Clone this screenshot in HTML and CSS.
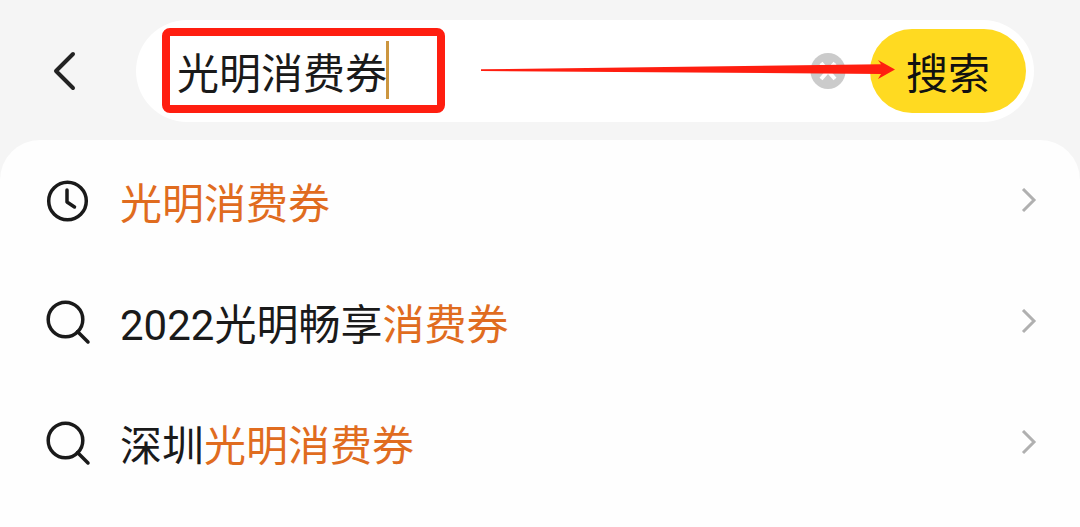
FILE: index.html
```html
<!DOCTYPE html>
<html lang="zh-CN">

<head>
    <meta charset="UTF-8">
    <meta name="viewport" content="width=device-width, initial-scale=1.0">
    <title>搜索</title>
    <link rel="stylesheet" href="styles.css">
</head>

<body>
    <!-- 顶部搜索栏 -->
    <header class="header">
        <button class="back" type="button" aria-label="返回">
            <svg width="24" height="42" viewBox="0 0 24 42">
                <path d="M21 4L4 21L21 38" />
            </svg>
        </button>
        <form class="search-bar">
            <div class="field">
                <input class="search-input" type="text" value="光明消费券" aria-label="搜索内容">
                <span class="caret"></span>
            </div>
            <button class="clear" type="button" aria-label="清空">
                <svg width="36" height="36" viewBox="0 0 36 36">
                    <ellipse cx="18" cy="18" rx="17.5" ry="18" />
                    <path d="M11 10L25 26M25 10L11 26" />
                </svg>
            </button>
            <button class="submit" type="button">搜索</button>
            <!-- 操作标注 -->
            <span class="mark-box"></span>
            <svg class="mark-arrow" width="414" height="20" viewBox="0 0 414 20">
                <path d="M0 9.3L400 4.3L397 0L414 9.5L397 19L400 14L0 11Z" />
            </svg>
        </form>
    </header>

    <!-- 搜索建议 -->
    <main class="panel">
        <ul class="list">
            <li>
                <a class="item" href="#">
                    <svg class="icon" width="46" height="46" viewBox="0 0 46 46">
                        <circle cx="21.5" cy="23" r="18.8" />
                        <path d="M21 12V24L28.5 29" stroke-linecap="round" stroke-linejoin="round" />
                    </svg>
                    <span class="text"><em>光明消费券</em></span>
                    <svg class="arrow" width="16" height="26" viewBox="0 0 16 26">
                        <path d="M2 1L13 12L2 23" />
                    </svg>
                </a>
            </li>
            <li>
                <a class="item" href="#">
                    <svg class="icon" width="46" height="46" viewBox="0 0 46 46">
                        <circle cx="19.5" cy="20.5" r="17.3" />
                        <path d="M31.5 32.5L42 43" stroke-linecap="round" />
                    </svg>
                    <span class="text"><span class="num">2022</span>光明畅享<em>消费券</em></span>
                    <svg class="arrow" width="16" height="26" viewBox="0 0 16 26">
                        <path d="M2 1L13 12L2 23" />
                    </svg>
                </a>
            </li>
            <li>
                <a class="item" href="#">
                    <svg class="icon" width="46" height="46" viewBox="0 0 46 46">
                        <circle cx="19.5" cy="20.5" r="17.3" />
                        <path d="M31.5 32.5L42 43" stroke-linecap="round" />
                    </svg>
                    <span class="text">深圳<em>光明消费券</em></span>
                    <svg class="arrow" width="16" height="26" viewBox="0 0 16 26">
                        <path d="M2 1L13 12L2 23" />
                    </svg>
                </a>
            </li>
        </ul>
    </main>
</body>

</html>
```
FILE: styles.css
```css
/* 整体样式 */
* {
    box-sizing: border-box;
}

body {
    display: flex;
    flex-direction: column;
    min-height: 100vh;
    margin: 0;
    background-color: #f5f5f5;
    color: #1a1a1a;
    font-family: "Noto Sans CJK SC", sans-serif;
    font-size: 42px;
    line-height: 60px;
}

button {
    padding: 0;
    border: none;
    background: none;
    color: inherit;
    font: inherit;
    cursor: pointer;
}

svg {
    display: block;
    fill: none;
}

/* 顶部搜索栏 */
.header {
    display: flex;
    align-items: center;
    gap: 60px;
    padding: 20px 46px 18px 52px;
}

.back path {
    stroke: #222;
    stroke-width: 4;
    stroke-linecap: round;
    stroke-linejoin: round;
}

.search-bar {
    position: relative;
    display: flex;
    flex: 1;
    align-items: center;
    height: 102px;
    padding: 0 8px 0 41px;
    border-radius: 51px;
    background-color: #fff;
}

.field {
    position: relative;
    flex: 1;
}

.search-input {
    display: block;
    width: 100%;
    height: 60px;
    padding: 0;
    border: none;
    outline: none;
    background: none;
    color: inherit;
    font: inherit;
}

.caret {
    position: absolute;
    top: 0;
    left: 209px;
    width: 3px;
    height: 58px;
    background-color: #cc963f;
}

.clear {
    margin-right: 24px;
}

.clear ellipse {
    fill: #cbcbcb;
}

.clear path {
    stroke: #fff;
    stroke-width: 4;
}

.submit {
    width: 156px;
    height: 84px;
    border-radius: 42px;
    background-color: #ffda21;
    color: #111;
}

/* 红色标注 */
.mark-box {
    position: absolute;
    top: 8px;
    left: 26px;
    width: 283px;
    height: 85px;
    border: 8px solid #ff1e10;
    border-radius: 8px;
    pointer-events: none;
}

.mark-arrow {
    position: absolute;
    top: 40px;
    right: 139px;
    fill: #ff1e10;
    pointer-events: none;
}

/* 搜索建议列表 */
.panel {
    flex: 1;
    border-radius: 40px 40px 0 0;
    background-color: #fefefe;
}

.list {
    margin: 0;
    padding: 0;
    list-style: none;
}

.item {
    display: flex;
    align-items: center;
    height: 121px;
    padding: 0 43px 0 46px;
    color: inherit;
    text-decoration: none;
}

.icon {
    stroke: #1a1a1a;
    stroke-width: 3.5;
}

.text {
    flex: 1;
    margin-left: 28px;
}

.text em {
    color: #e06c1f;
    font-style: normal;
}

.num {
    font-family: Roboto, sans-serif;
    line-height: 1;
}

.arrow {
    stroke: #b0b0b0;
    stroke-width: 3;
}
```
